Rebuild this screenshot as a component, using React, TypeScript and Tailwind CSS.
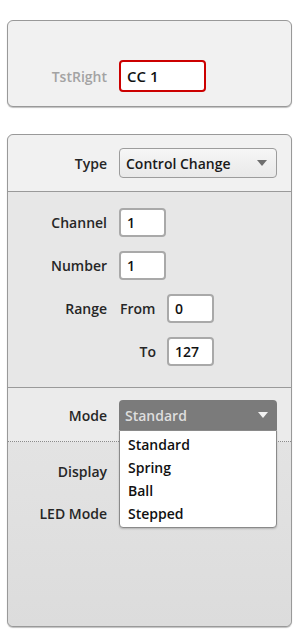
import React from 'react';

const Label: React.FC<{ children?: React.ReactNode; className?: string }> = ({ children, className = '' }) => (
  <div className={`w-[99px] shrink-0 text-right text-[14px] font-semibold text-[#262626] ${className}`}>{children}</div>
);

const NumBox: React.FC<{ value: string }> = ({ value }) => (
  <div className="flex h-[29px] w-[47px] items-center rounded-[4px] border-2 border-[#a9a9a9] bg-white pl-[6px] text-[14px] font-semibold text-[#111]">
    {value}
  </div>
);

const Arrow: React.FC<{ color: string }> = ({ color }) => (
  <svg width="10" height="6" viewBox="0 0 10 6" className="shrink-0">
    <path d="M0 0 L10 0 L5 6 Z" fill={color} />
  </svg>
);

const App: React.FC = () => {
  return (
    <div className="h-[640px] w-[300px] bg-white pt-[20px] font-['Open_Sans',sans-serif]">
      {/* Name panel */}
      <div className="ml-[7px] flex h-[87px] w-[285px] items-end rounded-[6px] border border-[#999] bg-[#f1f1f1] pb-[14px] shadow-[0_1px_1px_rgba(0,0,0,0.25)]">
        <div className="flex items-center">
          <Label className="!text-[#a3a3a3]">TstRight</Label>
          <div className="ml-[12px] flex h-[32px] w-[87px] items-center rounded-[4px] border-2 border-[#cc0000] bg-white pl-[6px] text-[15px] font-semibold text-[#111]">
            CC 1
          </div>
        </div>
      </div>

      {/* Mapping panel */}
      <div className="relative ml-[7px] mt-[27px] flex h-[493px] w-[285px] flex-col rounded-[6px] border border-[#999] bg-[#e2e2e2] shadow-[0_1px_1px_rgba(0,0,0,0.25)]">
        {/* Type */}
        <div className="flex h-[57px] items-start rounded-t-[6px] border-b border-[#9a9a9a] bg-[#f1f1f1] pt-[13px]">
          <div className="flex h-[30px] items-center">
            <Label>Type</Label>
            <div className="ml-[12px] flex h-[30px] w-[158px] items-center justify-between rounded-[4px] border border-[#9c9c9c] bg-gradient-to-b from-[#f6f6f6] to-[#e9e9e9] pl-[6px] pr-[9px] text-[14px] font-semibold text-[#1a1a1a]">
              <span>Control Change</span>
              <Arrow color="#6e6e6e" />
            </div>
          </div>
        </div>

        {/* Channel / Number / Range */}
        <div className="flex h-[196px] flex-col gap-[14px] border-b border-[#9a9a9a] bg-[#e7e7e7] pt-[16px]">
          <div className="flex items-center">
            <Label>Channel</Label>
            <div className="ml-[12px]"><NumBox value="1" /></div>
          </div>
          <div className="flex items-center">
            <Label>Number</Label>
            <div className="ml-[12px]"><NumBox value="1" /></div>
          </div>
          <div className="flex items-center">
            <Label>Range</Label>
            <div className="ml-[13px] w-[47px] text-[14px] font-semibold text-[#262626]">From</div>
            <NumBox value="0" />
          </div>
          <div className="flex items-center">
            <Label />
            <div className="ml-[13px] w-[47px] pr-[11px] text-right text-[14px] font-semibold text-[#262626]">To</div>
            <NumBox value="127" />
          </div>
        </div>

        {/* Mode */}
        <div className="relative flex h-[54px] items-start border-b border-dotted border-[#8a8a8a] bg-[#ebebeb] pt-[12px]">
          <div className="flex h-[30px] items-center">
            <Label>Mode</Label>
            <div className="ml-[12px] flex h-[30px] w-[158px] items-center justify-between rounded-t-[4px] bg-[#7b7b7b] pl-[6px] pr-[9px] text-[14px] font-semibold text-[#dedede]">
              <span>Standard</span>
              <Arrow color="#f2f2f2" />
            </div>
          </div>
          {/* open dropdown list */}
          <div className="absolute left-[111px] top-[42px] z-10 flex w-[158px] flex-col rounded-b-[4px] border border-[#8a8a8a] bg-white pb-[2px] pl-[8px] pt-[2px] text-[14px] font-semibold leading-[23px] text-[#111] shadow-[0_1px_2px_rgba(0,0,0,0.2)]">
            <span>Standard</span>
            <span>Spring</span>
            <span>Ball</span>
            <span>Stepped</span>
          </div>
        </div>

        {/* Display / LED Mode */}
        <div className="flex flex-1 flex-col gap-[20px] rounded-b-[6px] bg-gradient-to-b from-[#e3e3e3] to-[#dcdcdc] pt-[18px]">
          <div className="flex h-[22px] items-center">
            <Label>Display</Label>
          </div>
          <div className="flex h-[22px] items-center">
            <Label>LED Mode</Label>
          </div>
        </div>
      </div>
    </div>
  );
};

export default App;
